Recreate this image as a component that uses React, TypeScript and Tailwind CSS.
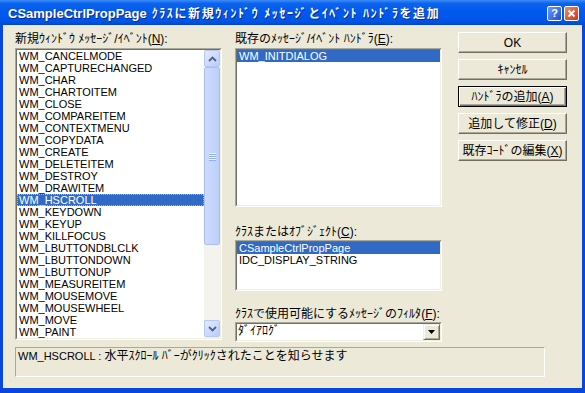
const messages = [
  "WM_CANCELMODE",
  "WM_CAPTURECHANGED",
  "WM_CHAR",
  "WM_CHARTOITEM",
  "WM_CLOSE",
  "WM_COMPAREITEM",
  "WM_CONTEXTMENU",
  "WM_COPYDATA",
  "WM_CREATE",
  "WM_DELETEITEM",
  "WM_DESTROY",
  "WM_DRAWITEM",
  "WM_HSCROLL",
  "WM_KEYDOWN",
  "WM_KEYUP",
  "WM_KILLFOCUS",
  "WM_LBUTTONDBLCLK",
  "WM_LBUTTONDOWN",
  "WM_LBUTTONUP",
  "WM_MEASUREITEM",
  "WM_MOUSEMOVE",
  "WM_MOUSEWHEEL",
  "WM_MOVE",
  "WM_PAINT",
];

const buttons = [
  { label: "OK", key: "" },
  { label: "ｷｬﾝｾﾙ", key: "" },
  { label: "ﾊﾝﾄﾞﾗの追加", key: "A", isDefault: true },
  { label: "追加して修正", key: "D" },
  { label: "既存ｺｰﾄﾞの編集", key: "X" },
];

// classic sunken 2px edge around list / combo boxes
const Sunken = ({ className, children }: { className: string; children: React.ReactNode }) => (
  <div className={`border border-t-[#aca899] border-l-[#aca899] border-r-white border-b-white ${className}`}>
    <div className="h-full border border-t-[#716f64] border-l-[#716f64] border-r-[#f1efe2] border-b-[#f1efe2] bg-white flex">
      {children}
    </div>
  </div>
);

const Chevron = ({ up }: { up?: boolean }) => (
  <svg width="9" height="6" viewBox="0 0 9 6">
    <path
      d={up ? "M1 5 L4.5 1.5 L8 5" : "M1 1 L4.5 4.5 L8 1"}
      fill="none"
      stroke="#4d6185"
      strokeWidth="1.8"
    />
  </svg>
);

const Label = ({ text, k, className = "" }: { text: string; k: string; className?: string }) => (
  <div className={`text-[12px] leading-[14px] text-black whitespace-nowrap ${className}`}>
    {text}(<span className="underline">{k}</span>):
  </div>
);

export default function App() {
  return (
    <div className="w-[585px] h-[393px] overflow-hidden bg-[#0a45dc] flex flex-col font-['Liberation_Sans','Noto_Sans_CJK_JP',sans-serif] select-none">
      {/* title bar */}
      <div className="h-[25px] shrink-0 flex items-center pl-[8px] pr-[6px] bg-[linear-gradient(to_bottom,#3b8cfc_0%,#0d63ec_14%,#0058ee_50%,#0055e6_85%,#0047cc_100%)]">
        <div className="flex-1 text-white font-bold whitespace-nowrap [text-shadow:1px_1px_#0b2a8a]">
          <span className="text-[13px]">CSampleCtrlPropPage</span>
          <span className="text-[12px] tracking-[1.6px]"> ｸﾗｽに新規ｳｨﾝﾄﾞｳ ﾒｯｾｰｼﾞとｲﾍﾞﾝﾄ ﾊﾝﾄﾞﾗを追加</span>
        </div>
        <div className="flex gap-[2px] mt-[1px]">
          <div className="w-[15px] h-[15px] rounded-[2px] border border-white bg-[linear-gradient(135deg,#6a9bfb,#1c4fd8)] flex items-center justify-center text-white text-[11px] font-bold leading-none">
            ?
          </div>
          <div className="w-[15px] h-[15px] rounded-[2px] border border-white bg-[linear-gradient(135deg,#ef8b6c,#c6391b)] flex items-center justify-center">
            <svg width="9" height="9" viewBox="0 0 9 9">
              <path d="M1.5 1.5 L7.5 7.5 M7.5 1.5 L1.5 7.5" stroke="white" strokeWidth="2" />
            </svg>
          </div>
        </div>
      </div>

      {/* client area */}
      <div className="flex-1 px-[3px] pb-[5px] flex">
        <div className="flex-1 bg-[#ece9d8] flex flex-col pl-[12px] pt-[6px]">
          <div className="flex">
            {/* message list */}
            <div className="w-[207px] flex flex-col">
              <Label text="新規ｳｨﾝﾄﾞｳ ﾒｯｾｰｼﾞ/ｲﾍﾞﾝﾄ" k="N" className="h-[17px] pt-[1px]" />
              <Sunken className="h-[292px]">
                <div className="flex-1 flex flex-col">
                  {messages.map((m) => (
                    <div
                      key={m}
                      className={`h-[12px] leading-[12px] text-[11px] pl-[2px] whitespace-nowrap ${
                        m === "WM_HSCROLL"
                          ? "bg-[#316ac5] text-white outline outline-1 outline-dotted outline-[#d9b25c] -outline-offset-1"
                          : "text-black"
                      }`}
                    >
                      {m}
                    </div>
                  ))}
                </div>
                {/* XP scrollbar */}
                <div className="w-[16px] bg-[#f4f3ee] flex flex-col">
                  <div className="h-[17px] rounded-[2px] border border-[#b3c8f5] bg-[linear-gradient(135deg,#e3ebfe,#b8ccfb)] flex items-center justify-center">
                    <Chevron up />
                  </div>
                  <div className="h-[178px] rounded-[2px] border border-[#a9bff3] bg-[linear-gradient(90deg,#cddbfd,#bccffb)] flex flex-col items-center justify-center gap-[1px]">
                    {[0, 1, 2, 3].map((i) => (
                      <div key={i} className="w-[7px] h-[1px] bg-[#eef4fe] shadow-[0_1px_0_#8eb0f6]" />
                    ))}
                  </div>
                  <div className="flex-1" />
                  <div className="h-[17px] mb-[1px] rounded-[2px] border border-[#b3c8f5] bg-[linear-gradient(135deg,#e3ebfe,#b8ccfb)] flex items-center justify-center">
                    <Chevron />
                  </div>
                </div>
              </Sunken>
            </div>

            {/* handlers / classes / filter */}
            <div className="w-[207px] ml-[13px] flex flex-col">
              <Label text="既存のﾒｯｾｰｼﾞ/ｲﾍﾞﾝﾄ ﾊﾝﾄﾞﾗ" k="E" className="h-[17px] pt-[1px]" />
              <Sunken className="h-[159px]">
                <div className="flex-1">
                  <div className="h-[12px] leading-[12px] text-[11px] pl-[2px] bg-[#316ac5] text-white">WM_INITDIALOG</div>
                </div>
              </Sunken>
              <Label text="ｸﾗｽまたはｵﾌﾞｼﾞｪｸﾄ" k="C" className="mt-[18px] h-[15px]" />
              <Sunken className="h-[51px]">
                <div className="flex-1">
                  <div className="h-[12px] leading-[12px] text-[11px] pl-[2px] bg-[#316ac5] text-white">CSampleCtrlPropPage</div>
                  <div className="h-[12px] leading-[12px] text-[11px] pl-[2px] text-black">IDC_DISPLAY_STRING</div>
                </div>
              </Sunken>
              <Label text="ｸﾗｽで使用可能にするﾒｯｾｰｼﾞのﾌｨﾙﾀ" k="F" className="mt-[16px] h-[15px]" />
              <Sunken className="h-[20px]">
                <div className="flex-1 text-[12px] leading-[15px] pl-[1px] text-black">ﾀﾞｲｱﾛｸﾞ</div>
                <div className="w-[17px] bg-[#ece9d8] border border-t-[#f1efe2] border-l-[#f1efe2] border-r-[#716f64] border-b-[#716f64] shadow-[inset_1px_1px_#fff,inset_-1px_-1px_#aca899] flex items-center justify-center">
                  <svg width="7" height="4" viewBox="0 0 7 4">
                    <path d="M0 0 H7 L3.5 4 Z" fill="black" />
                  </svg>
                </div>
              </Sunken>
            </div>

            {/* command buttons */}
            <div className="ml-[16px] mt-[1px] flex flex-col gap-[6px]">
              {buttons.map((b) => (
                <div
                  key={b.label}
                  className={`w-[109px] h-[21px] bg-[#ece9d8] flex items-center justify-center text-[12px] text-black whitespace-nowrap ${
                    b.isDefault
                      ? "border border-black shadow-[inset_1px_1px_#fff,inset_-1px_-1px_#716f64,inset_-2px_-2px_#aca899]"
                      : "border border-t-white border-l-white border-r-[#716f64] border-b-[#716f64] shadow-[inset_-1px_-1px_#aca899]"
                  }`}
                >
                  {b.label}
                  {b.key && (
                    <>
                      (<span className="underline">{b.key}</span>)
                    </>
                  )}
                </div>
              ))}
            </div>
          </div>

          {/* description */}
          <div className="mt-[5px] w-[530px] h-[30px] border border-t-[#aca899] border-l-[#aca899] border-r-white border-b-white pl-[2px] leading-[13px] text-black whitespace-nowrap">
            <span className="text-[11px]">WM_HSCROLL : </span>
            <span className="text-[12px]">水平ｽｸﾛｰﾙ ﾊﾞｰがｸﾘｯｸされたことを知らせます</span>
          </div>
        </div>
      </div>
    </div>
  );
}
